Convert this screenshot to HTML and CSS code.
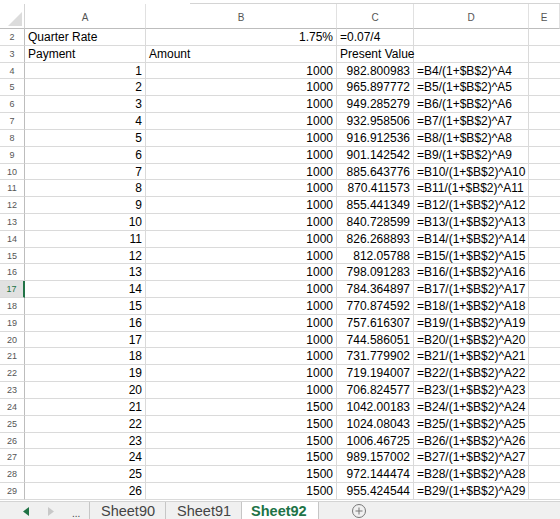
FILE: index.html
```html
<!DOCTYPE html>
<html>
<head>
<meta charset="utf-8">
<link rel="stylesheet" href="styles.css">
</head>
<body>
<div class="top"><div class="fbar"></div></div>
<div class="sheet" id="sheet">
  <div class="corner"><svg width="14" height="14" viewBox="0 0 14 14"><polygon points="14,0 14,14 0,14" fill="#dcdcdc"/></svg></div>
  <div class="ch">A</div><div class="ch">B</div><div class="ch">C</div><div class="ch">D</div><div class="ch last">E</div>
</div>
<div class="tabs">
  <div class="nav">
    <span class="arr left"><svg width="6" height="9" viewBox="0 0 6 9"><polygon points="6,0 6,9 0,4.5" fill="#217346"/></svg></span>
    <span class="arr right"><svg width="6" height="9" viewBox="0 0 6 9"><polygon points="0,0 0,9 6,4.5" fill="#c8c8c8"/></svg></span>
    <span class="dots">...</span>
  </div>
  <div class="tab">Sheet90</div>
  <div class="tab">Sheet91</div>
  <div class="tab active">Sheet92</div>
  <div class="add"><svg width="16" height="16" viewBox="0 0 16 16"><circle cx="8" cy="8" r="6.5" fill="none" stroke="#777" stroke-width="1"/><path d="M8 4.5v7M4.5 8h7" stroke="#777" stroke-width="1"/></svg></div>
</div>
<script src="app.js"></script>
</body>
</html>
```
FILE: app.js
```js
const vals = ["982.800983","965.897772","949.285279","932.958506","916.912536","901.142542","885.643776","870.411573","855.441349","840.728599","826.268893","812.05788","798.091283","784.364897","770.874592","757.616307","744.586051","731.779902","719.194007","706.824577","1042.00183","1024.08043","1006.46725","989.157002","972.144474","955.424544"];
const sheet = document.getElementById('sheet');
function cell(text, cls) {
  const d = document.createElement('div');
  d.className = 'c ' + (cls || '');
  d.textContent = text;
  sheet.appendChild(d);
}
function row(n, cells, sel) {
  cell(String(n), 'rh' + (sel ? ' sel' : ''));
  cells.forEach(([t, cls], i) => cell(t, cls + (i === 4 ? ' last' : '')));
}
row(2, [["Quarter Rate","t"],["1.75%","n"],["=0.07/4","t"],["","t"],["","t"]]);
row(3, [["Payment","t"],["Amount","t"],["Present Value","t"],["","t"],["","t"]]);
for (let i = 0; i < 26; i++) {
  const r = i + 4;
  row(r, [[String(i + 1),"n"],[i < 20 ? "1000" : "1500","n"],[vals[i],"n"],["=B"+r+"/(1+$B$2)^A"+r,"t"],["","t"]], r === 17);
}
```
FILE: styles.css
```css
html, body { margin: 0; padding: 0; background: #fff; }
body { width: 560px; height: 519px; overflow: hidden; font-family: "Liberation Sans", Arial, sans-serif; position: relative; }
.top { height: 4px; position: relative; }
.fbar { margin-left: 190px; height: 3px; border-bottom: 1px solid #d4d4d4; }
.sheet {
  display: grid;
  grid-template-columns: 25px 121px 191px 77px 115px 31px;
  grid-template-rows: 25px;
  grid-auto-rows: 16.82px;
}
.corner { border-right: 1px solid #d4d4d4; border-bottom: 1px solid #bdbdbd; display: flex; align-items: flex-end; justify-content: flex-end; padding: 0 2px 2px 0; box-sizing: border-box; }
.ch { border-right: 1px solid #e1e1e1; border-bottom: 1px solid #bdbdbd; font-size: 10px; color: #555; display: flex; align-items: center; justify-content: center; box-sizing: border-box; padding-top: 2px; }
.c { box-sizing: border-box; border-right: 1px solid #dadada; border-bottom: 1px solid #dadada; font-size: 12px; color: #000; white-space: nowrap; overflow: visible; line-height: 16px; }
.c.t { padding-left: 3px; }
.c.n { text-align: right; padding-right: 3px; }
.c.last { border-right: none; }
.rh { font-size: 9px; color: #555; text-align: center; border-right: 1px solid #bdbdbd; border-bottom: 1px solid #dadada; line-height: 16px; }
.rh.sel { background: #e1e1e1; color: #217346; border-right: 2px solid #217346; }
.tabs {
  position: absolute; left: 0; right: 0; top: 501px; height: 18px;
  background: #f0f0f0; border-top: 1px solid #d4d4d4;
  display: flex; align-items: stretch; font-size: 14.5px; color: #444;
}
.nav { width: 90px; display: flex; align-items: center; border-right: 1px solid #c6c6c6; box-sizing: border-box; }
.arr { display: flex; align-items: center; }
.arr.left { margin-left: 23px; }
.arr.right { margin-left: 19px; }
.dots { margin-left: 18px; font-size: 10px; color: #444; padding-top: 4px; }
.tab { padding: 0 10px 0 11px; display: flex; align-items: center; border-right: 1px solid #c6c6c6; }
.tab.active { background: #fff; color: #217346; font-weight: bold; padding: 0 11px 0 9px; }
.add { margin-left: 32px; display: flex; align-items: center; }
```
